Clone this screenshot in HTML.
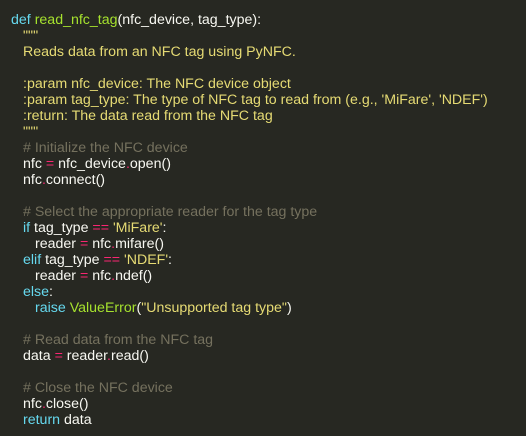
<!DOCTYPE html>
<html><head><meta charset="utf-8"><style>
html,body{margin:0;padding:0;background:#272822;width:526px;height:436px;overflow:hidden}
pre{margin:0;padding:12px 0 0 11px;font-family:"Liberation Sans",sans-serif;font-size:14.2px;line-height:16px;color:#f8f8f2;white-space:pre;letter-spacing:0}
.k{color:#66d9ef}.f{color:#a6e22e}.s{color:#e6db74}.o{color:#f92672}.c{color:#75715e}
.i{display:inline-block;width:12px}.ii{display:inline-block;width:24px}
</style></head><body><pre><span class="k">def</span> <span class="f">read_nfc_tag</span>(nfc_device, tag_type):
<span class="i"></span><span class="s">"""</span>
<span class="i"></span><span class="s">Reads data from an NFC tag using PyNFC.</span>

<span class="i"></span><span class="s">:param nfc_device: The NFC device object</span>
<span class="i"></span><span class="s">:param tag_type: The type of NFC tag to read from (e.g., 'MiFare', 'NDEF')</span>
<span class="i"></span><span class="s">:return: The data read from the NFC tag</span>
<span class="i"></span><span class="s">"""</span>
<span class="i"></span><span class="c"># Initialize the NFC device</span>
<span class="i"></span>nfc <span class="o">=</span> nfc_device<span class="o">.</span>open()
<span class="i"></span>nfc<span class="o">.</span>connect()

<span class="i"></span><span class="c"># Select the appropriate reader for the tag type</span>
<span class="i"></span><span class="k">if</span> tag_type <span class="o">==</span> <span class="s">'MiFare'</span>:
<span class="ii"></span>reader <span class="o">=</span> nfc<span class="o">.</span>mifare()
<span class="i"></span><span class="k">elif</span> tag_type <span class="o">==</span> <span class="s">'NDEF'</span>:
<span class="ii"></span>reader <span class="o">=</span> nfc<span class="o">.</span>ndef()
<span class="i"></span><span class="k">else</span>:
<span class="ii"></span><span class="k">raise</span> <span class="f">ValueError</span>(<span class="s">"Unsupported tag type"</span>)

<span class="i"></span><span class="c"># Read data from the NFC tag</span>
<span class="i"></span>data <span class="o">=</span> reader<span class="o">.</span>read()

<span class="i"></span><span class="c"># Close the NFC device</span>
<span class="i"></span>nfc<span class="o">.</span>close()
<span class="i"></span><span class="k">return</span> data</pre></body></html>
